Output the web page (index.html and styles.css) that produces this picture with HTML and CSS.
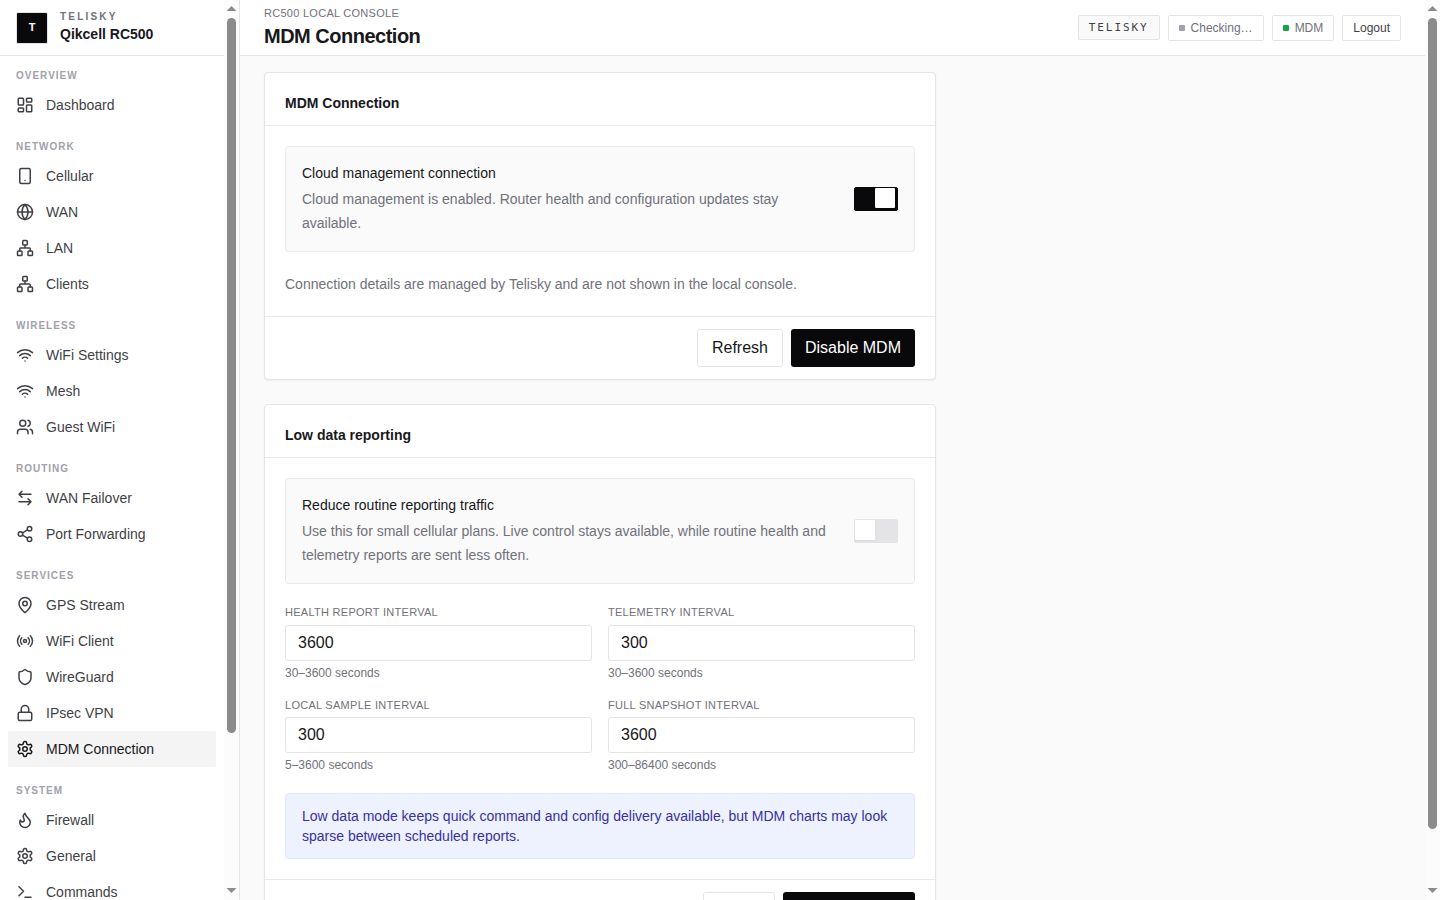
FILE: index.html
```html
<!DOCTYPE html>
<html lang="en">
<head>
<meta charset="utf-8">
<title>MDM Connection</title>
<link rel="stylesheet" href="styles.css">
</head>
<body>
<div class="app">
  <aside class="sidebar">
    <div class="sidebar-content">
      <div class="brand">
        <div class="logo">T</div>
        <div class="brand-text">
          <div class="brand-name">TELISKY</div>
          <div class="brand-model">Qikcell RC500</div>
        </div>
      </div>
      <nav class="nav">
        <section>
          <h2>OVERVIEW</h2>
          <a class="item"><svg viewBox="0 0 24 24"><rect x="3" y="3" width="7" height="9" rx="1"/><rect x="14" y="3" width="7" height="5" rx="1"/><rect x="14" y="12" width="7" height="9" rx="1"/><rect x="3" y="16" width="7" height="5" rx="1"/></svg>Dashboard</a>
        </section>
        <section>
          <h2>NETWORK</h2>
          <a class="item"><svg viewBox="0 0 24 24"><rect x="5" y="2" width="14" height="20" rx="2"/><path d="M12 18h.01"/></svg>Cellular</a>
          <a class="item"><svg viewBox="0 0 24 24"><circle cx="12" cy="12" r="10"/><path d="M12 2a14.500 14.500 0 0 0 0 20 14.500 14.500 0 0 0 0-20M2 12h20"/></svg>WAN</a>
          <a class="item"><svg viewBox="0 0 24 24"><use href="#network"/></svg>LAN</a>
          <a class="item"><svg viewBox="0 0 24 24"><use href="#network"/></svg>Clients</a>
        </section>
        <section>
          <h2>WIRELESS</h2>
          <a class="item"><svg viewBox="0 0 24 24"><use href="#wifi"/></svg>WiFi Settings</a>
          <a class="item"><svg viewBox="0 0 24 24"><use href="#wifi"/></svg>Mesh</a>
          <a class="item"><svg viewBox="0 0 24 24"><path d="M16 21v-2a4 4 0 0 0-4-4H6a4 4 0 0 0-4 4v2"/><circle cx="9" cy="7" r="4"/><path d="M22 21v-2a4 4 0 0 0-3-3.870M16 3.130a4 4 0 0 1 0 7.750"/></svg>Guest WiFi</a>
        </section>
        <section>
          <h2>ROUTING</h2>
          <a class="item"><svg viewBox="0 0 24 24"><path d="M8 3 4 7l4 4M4 7h16M16 13l4 4-4 4M20 17H4"/></svg>WAN Failover</a>
          <a class="item"><svg viewBox="0 0 24 24"><circle cx="18" cy="5" r="3"/><circle cx="6" cy="12" r="3"/><circle cx="18" cy="19" r="3"/><path d="m8.590 13.510 6.830 3.980M15.410 6.510l-6.820 3.980"/></svg>Port Forwarding</a>
        </section>
        <section>
          <h2>SERVICES</h2>
          <a class="item"><svg viewBox="0 0 24 24"><path d="M20 10c0 4.993-5.539 10.193-7.399 11.799a1 1 0 0 1-1.202 0C9.539 20.193 4 14.993 4 10a8 8 0 0 1 16 0"/><circle cx="12" cy="10" r="3"/></svg>GPS Stream</a>
          <a class="item"><svg viewBox="0 0 24 24"><path d="M4.900 19.100C1 15.200 1 8.800 4.900 4.900M7.800 16.200c-2.300-2.300-2.300-6.100 0-8.500"/><circle cx="12" cy="12" r="2"/><path d="M16.200 7.800c2.300 2.300 2.300 6.100 0 8.500M19.100 4.900C23 8.800 23 15.100 19.100 19"/></svg>WiFi Client</a>
          <a class="item"><svg viewBox="0 0 24 24"><path d="M20 13c0 5-3.500 7.500-7.660 8.950a1 1 0 0 1-.67-.01C7.500 20.500 4 18 4 13V6a1 1 0 0 1 1-1c2 0 4.500-1.200 6.240-2.720a1.170 1.170 0 0 1 1.520 0C14.510 3.810 17 5 19 5a1 1 0 0 1 1 1z"/></svg>WireGuard</a>
          <a class="item"><svg viewBox="0 0 24 24"><rect x="3" y="11" width="18" height="11" rx="2"/><path d="M7 11V7a5 5 0 0 1 10 0v4"/></svg>IPsec VPN</a>
          <a class="item active"><svg viewBox="0 0 24 24"><use href="#gear"/></svg>MDM Connection</a>
        </section>
        <section>
          <h2>SYSTEM</h2>
          <a class="item"><svg viewBox="0 0 24 24"><path d="M8.500 14.500A2.500 2.500 0 0 0 11 12c0-1.380-.5-2-1-3-1.072-2.143-.224-4.054 2-6 .5 2.500 2 4.900 4 6.500 2 1.600 3 3.500 3 5.500a7 7 0 1 1-14 0c0-1.153.433-2.294 1-3a2.500 2.500 0 0 0 2.500 2.500z"/></svg>Firewall</a>
          <a class="item"><svg viewBox="0 0 24 24"><use href="#gear"/></svg>General</a>
          <a class="item"><svg viewBox="0 0 24 24"><path d="m4 17 6-6-6-6M12 19h8"/></svg>Commands</a>
        </section>
      </nav>
    </div>
    <div class="scrollbar"><i class="up"></i><i class="thumb thumb-nav"></i><i class="down"></i></div>
  </aside>

  <div class="main">
    <header class="topbar">
      <div class="heading">
        <div class="eyebrow">RC500 LOCAL CONSOLE</div>
        <h1>MDM Connection</h1>
      </div>
      <div class="status">
        <span class="badge">TELISKY</span>
        <span class="pill"><i class="dot"></i>Checking…</span>
        <span class="pill"><i class="dot online"></i>MDM</span>
        <span class="pill logout">Logout</span>
      </div>
    </header>
    <main class="content">
      <section class="card">
        <h3>MDM Connection</h3>
        <div class="card-body">
          <div class="setting">
            <div>
              <div class="setting-title">Cloud management connection</div>
              <p>Cloud management is enabled. Router health and configuration updates stay available.</p>
            </div>
            <span class="toggle on"><i></i></span>
          </div>
          <p>Connection details are managed by Telisky and are not shown in the local console.</p>
        </div>
        <div class="card-footer"><button class="btn">Refresh</button><button class="btn primary">Disable MDM</button></div>
      </section>
      <section class="card">
        <h3>Low data reporting</h3>
        <div class="card-body">
          <div class="setting">
            <div>
              <div class="setting-title">Reduce routine reporting traffic</div>
              <p>Use this for small cellular plans. Live control stays available, while routine health and telemetry reports are sent less often.</p>
            </div>
            <span class="toggle"><i></i></span>
          </div>
          <div class="fields">
            <label class="field"><span class="field-label">HEALTH REPORT INTERVAL</span><input value="3600"><small>30–3600 seconds</small></label>
            <label class="field"><span class="field-label">TELEMETRY INTERVAL</span><input value="300"><small>30–3600 seconds</small></label>
            <label class="field"><span class="field-label">LOCAL SAMPLE INTERVAL</span><input value="300"><small>5–3600 seconds</small></label>
            <label class="field"><span class="field-label">FULL SNAPSHOT INTERVAL</span><input value="3600"><small>300–86400 seconds</small></label>
          </div>
          <div class="notice">Low data mode keeps quick command and config delivery available, but MDM charts may look sparse between scheduled reports.</div>
        </div>
        <div class="card-footer"><button class="btn reset"></button><button class="btn primary save"></button></div>
      </section>
    </main>
  </div>
  <div class="scrollbar"><i class="up"></i><i class="thumb thumb-page"></i><i class="down"></i></div>
</div>

<svg class="symbols">
  <symbol id="network" viewBox="0 0 24 24"><rect x="16" y="16" width="6" height="6" rx="1"/><rect x="2" y="16" width="6" height="6" rx="1"/><rect x="9" y="2" width="6" height="6" rx="1"/><path d="M5 16v-3a1 1 0 0 1 1-1h12a1 1 0 0 1 1 1v3M12 12V8"/></symbol>
  <symbol id="wifi" viewBox="0 0 24 24"><path d="M12 20h.01M2 8.820a15 15 0 0 1 20 0M5 12.859a10 10 0 0 1 14 0M8.500 16.429a5 5 0 0 1 7 0"/></symbol>
  <symbol id="gear" viewBox="0 0 24 24"><path d="M12.220 2h-.44a2 2 0 0 0-2 2v.18a2 2 0 0 1-1 1.730l-.43.25a2 2 0 0 1-2 0l-.15-.08a2 2 0 0 0-2.730.73l-.22.38a2 2 0 0 0 .73 2.730l.15.1a2 2 0 0 1 1 1.720v.51a2 2 0 0 1-1 1.740l-.15.09a2 2 0 0 0-.73 2.730l.22.38a2 2 0 0 0 2.730.73l.15-.08a2 2 0 0 1 2 0l.43.25a2 2 0 0 1 1 1.730V20a2 2 0 0 0 2 2h.44a2 2 0 0 0 2-2v-.18a2 2 0 0 1 1-1.730l.43-.25a2 2 0 0 1 2 0l.15.08a2 2 0 0 0 2.730-.73l.22-.39a2 2 0 0 0-.73-2.730l-.15-.08a2 2 0 0 1-1-1.740v-.5a2 2 0 0 1 1-1.740l.15-.09a2 2 0 0 0 .73-2.730l-.22-.38a2 2 0 0 0-2.730-.73l-.15.08a2 2 0 0 1-2 0l-.43-.25a2 2 0 0 1-1-1.730V4a2 2 0 0 0-2-2z"/><circle cx="12" cy="12" r="3"/></symbol>
</svg>
</body>
</html>
```
FILE: styles.css
```css
* { box-sizing: border-box; margin: 0; padding: 0; }
body {
  height: 100vh;
  overflow: hidden;
  background: #fafafa;
  color: #18181b;
  font: 14px/20px "Liberation Sans", Arial, sans-serif;
}
.symbols { display: none; }
.app { display: flex; height: 100vh; overflow: hidden; }

.sidebar {
  display: flex;
  flex: none;
  width: 240px;
  border-right: 1px solid #e4e4e7;
  background: #fff;
}
.sidebar-content { flex: 1; overflow: hidden; }
.brand {
  display: flex;
  align-items: center;
  gap: 12px;
  height: 56px;
  padding: 0 16px;
  border-bottom: 1px solid #e4e4e7;
}
.brand-text { padding-bottom: 2px; }
.logo {
  width: 32px;
  height: 32px;
  border: 1px solid #e4e4e7;
  border-radius: 2px;
  background: #09090b;
  color: #fff;
  font-size: 11px;
  font-weight: 700;
  line-height: 29px;
  text-align: center;
}
.brand-name {
  color: #71717a;
  font-size: 10px;
  font-weight: 700;
  line-height: 15px;
  letter-spacing: 2.2px;
}
.brand-model { font-weight: 700; }

.nav { display: flex; flex-direction: column; gap: 16px; padding: 12px 8px; }
.nav h2 {
  margin-bottom: 4px;
  padding: 0 8px;
  color: #a1a1aa;
  font-size: 10px;
  font-weight: 700;
  line-height: 15px;
  letter-spacing: 1px;
}
.item {
  display: flex;
  align-items: center;
  gap: 12px;
  height: 36px;
  padding: 0 8px;
  border-radius: 2px;
  color: #3f3f46;
}
.item.active { background: #f4f4f5; color: #18181b; }
.item svg {
  width: 18px;
  height: 18px;
  fill: none;
  stroke: currentColor;
  stroke-width: 2;
  stroke-linecap: round;
  stroke-linejoin: round;
}

.scrollbar {
  display: flex;
  flex: none;
  flex-direction: column;
  align-items: center;
  width: 15px;
  height: 100vh;
  padding: 6px 0 7px;
  background: #fcfcfc;
}
.up, .down { width: 10px; height: 5px; background: #8b8b8b; }
.up { clip-path: polygon(50% 0, 100% 100%, 0 100%); }
.down { margin-top: auto; clip-path: polygon(0 0, 100% 0, 50% 100%); }
.thumb { width: 9px; margin-top: 7px; border-radius: 5px; background: #8b8b8b; }
.thumb-nav { height: 715px; }
.thumb-page { height: 811px; }

.main { flex: 1; min-width: 0; }
.topbar {
  display: flex;
  align-items: center;
  justify-content: space-between;
  height: 56px;
  padding: 0 24px;
  border-bottom: 1px solid #e4e4e7;
  background: #fff;
}
.eyebrow, .field-label {
  color: #71717a;
  font-size: 11px;
  line-height: 16.5px;
  letter-spacing: 0.025em;
}
h1 { font-size: 20px; line-height: 28px; letter-spacing: -0.5px; }
.status { display: flex; align-items: center; gap: 8px; }
.badge {
  padding: 4px 10px 2px;
  border: 1px solid #e4e4e7;
  border-radius: 2px;
  background: #fafafa;
  color: #3f3f46;
  font: 11px/16.5px "DejaVu Sans Mono", monospace;
  letter-spacing: 1.93px;
}
.pill {
  display: flex;
  align-items: center;
  gap: 6px;
  padding: 4px 10px;
  border: 1px solid #e4e4e7;
  border-radius: 2px;
  color: #71717a;
  font-size: 12px;
  line-height: 16px;
}
.logout { color: #3f3f46; }
.dot { width: 6px; height: 6px; border-radius: 1px; background: #a1a1aa; }
.dot.online { background: #16a34a; }

.content { display: flex; flex-direction: column; gap: 24px; width: 720px; padding: 16px 24px; }
.card {
  border: 1px solid #e4e4e7;
  border-radius: 4px;
  background: #fff;
  box-shadow: 0 1px 2px rgba(0, 0, 0, 0.05);
}
h3 { padding: 20px 20px 12px; border-bottom: 1px solid #e9e9eb; font-size: 14px; line-height: 20px; }
.card-body { display: flex; flex-direction: column; gap: 20px; padding: 20px; }
.card-body p { color: #71717a; line-height: 24px; }
.setting {
  display: flex;
  align-items: center;
  justify-content: space-between;
  gap: 24px;
  padding: 16px;
  border: 1px solid #e9e9eb;
  border-radius: 4px;
  background: #fafafa;
}
.setting-title { margin-bottom: 4px; }
.toggle {
  flex: none;
  width: 44px;
  height: 24px;
  border: 1px solid #e4e4e7;
  border-radius: 2px;
  background: #e4e4e7;
}
.toggle i {
  display: block;
  width: 20px;
  height: 20px;
  border-radius: 1px;
  background: #fff;
  box-shadow: 0 1px 2px rgba(0, 0, 0, 0.05);
}
.toggle.on { border-color: #09090b; background: #09090b; }
.toggle.on i { margin-left: 20px; }
.fields { display: grid; grid-template-columns: 1fr 1fr; gap: 16px; }
.field { display: flex; flex-direction: column; gap: 4px; }
.field input {
  width: 100%;
  height: 36px;
  padding: 0 12px;
  border: 1px solid #e4e4e7;
  border-radius: 3px;
  background: #fff;
  color: #18181b;
  font: 16px "Liberation Sans", Arial, sans-serif;
}
.field small { color: #71717a; font-size: 12px; line-height: 16px; }
.notice {
  padding: 12px 16px;
  border: 1px solid #e0e7ff;
  border-radius: 4px;
  background: #eef2ff;
  color: #3730a3;
}
.card-footer {
  display: flex;
  justify-content: flex-end;
  gap: 8px;
  padding: 12px 20px;
  border-top: 1px solid #e9e9eb;
}
.btn {
  height: 38px;
  padding: 0 14px;
  border: 1px solid #e4e4e7;
  border-radius: 3px;
  background: #fff;
  color: #18181b;
  font: 16px/24px "Liberation Sans", Arial, sans-serif;
}
.btn.primary { border: 0; background: #09090b; color: #fff; }
.reset { width: 72px; }
.save { width: 132px; }
```
